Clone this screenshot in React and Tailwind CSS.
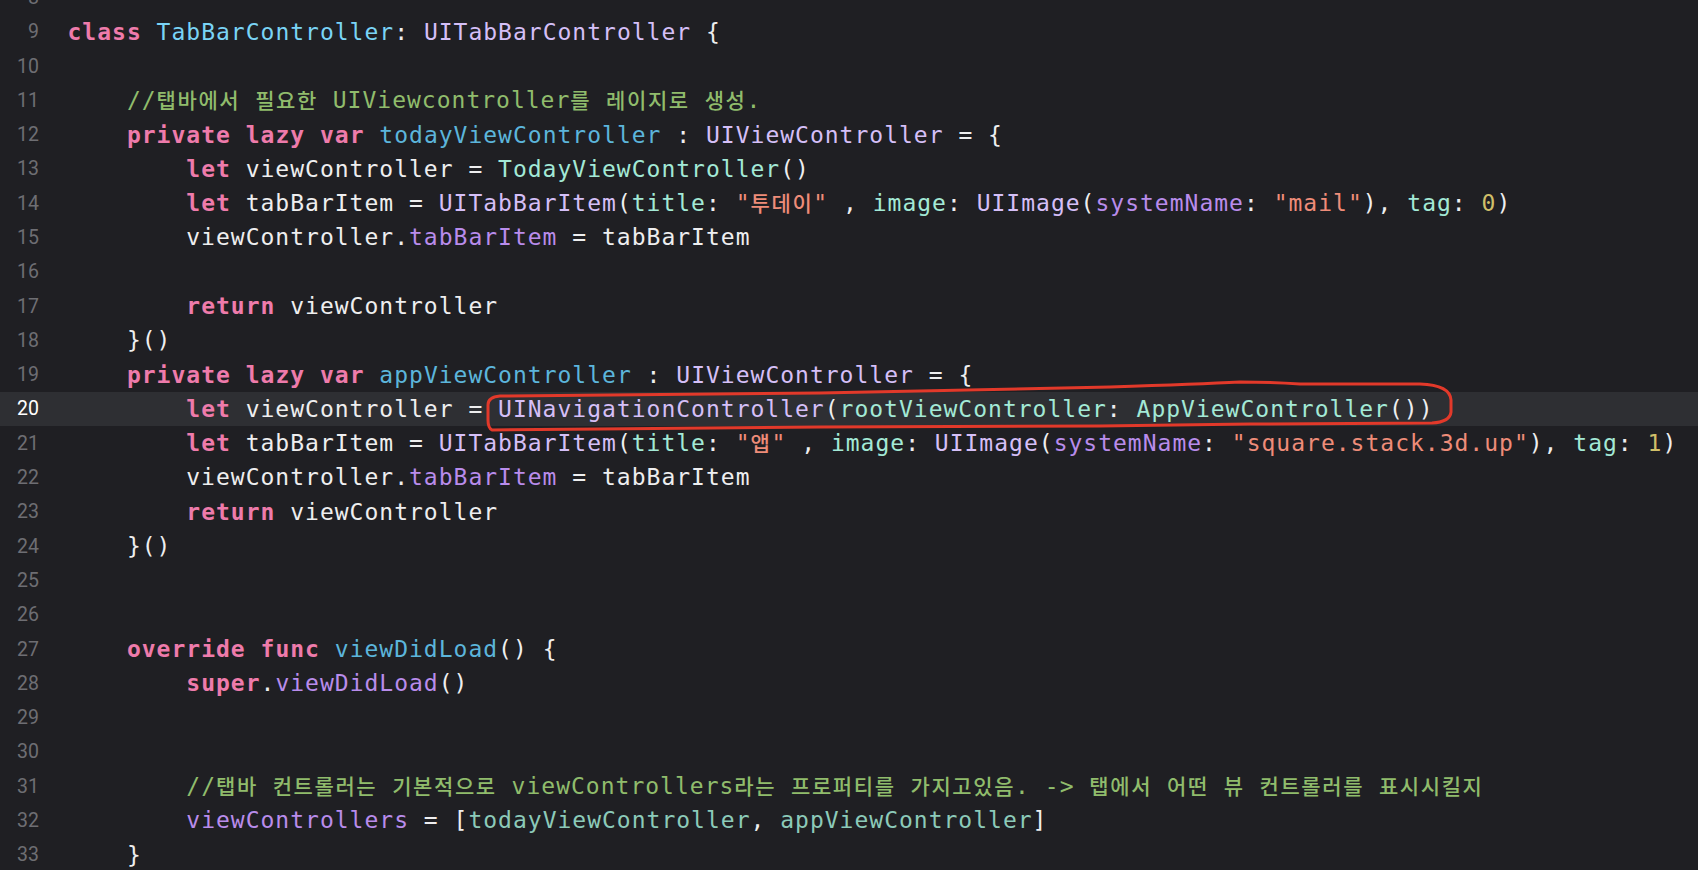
import React from 'react'

// Xcode dark theme token colours
const C = {
  kw: 'text-[#ee7bab] font-bold',
  pl: 'text-[#eeeeef]',
  decl: 'text-[#7ad4f6]',
  odecl: 'text-[#5cb5db]',
  type: 'text-[#d5bff7]',
  proj: 'text-[#a3e9d6]',
  fn: 'text-[#b98ceb]',
  str: 'text-[#ee8c79]',
  num: 'text-[#d0bf69]',
  cm: 'text-[#90bc6c]',
  prop: 'text-[#8ccab9]',
}

const I1 = '    '
const I2 = '        '

const LINES = [
  { n: 8, t: [] },
  { n: 9, t: [['kw', 'class'], ['pl', ' '], ['decl', 'TabBarController'], ['pl', ': '], ['type', 'UITabBarController'], ['pl', ' {']] },
  { n: 10, t: [] },
  { n: 11, t: [['pl', I1], ['cm', '//탭바에서 필요한 UIViewcontroller를 레이지로 생성.']] },
  { n: 12, t: [['pl', I1], ['kw', 'private'], ['pl', ' '], ['kw', 'lazy'], ['pl', ' '], ['kw', 'var'], ['pl', ' '], ['odecl', 'todayViewController'], ['pl', ' : '], ['type', 'UIViewController'], ['pl', ' = {']] },
  { n: 13, t: [['pl', I2], ['kw', 'let'], ['pl', ' viewController = '], ['proj', 'TodayViewController'], ['pl', '()']] },
  { n: 14, t: [['pl', I2], ['kw', 'let'], ['pl', ' tabBarItem = '], ['type', 'UITabBarItem'], ['pl', '('], ['proj', 'title'], ['pl', ': '], ['str', '"투데이"'], ['pl', ' , '], ['proj', 'image'], ['pl', ': '], ['type', 'UIImage'], ['pl', '('], ['fn', 'systemName'], ['pl', ': '], ['str', '"mail"'], ['pl', '), '], ['proj', 'tag'], ['pl', ': '], ['num', '0'], ['pl', ')']] },
  { n: 15, t: [['pl', I2 + 'viewController.'], ['fn', 'tabBarItem'], ['pl', ' = tabBarItem']] },
  { n: 16, t: [] },
  { n: 17, t: [['pl', I2], ['kw', 'return'], ['pl', ' viewController']] },
  { n: 18, t: [['pl', I1 + '}()']] },
  { n: 19, t: [['pl', I1], ['kw', 'private'], ['pl', ' '], ['kw', 'lazy'], ['pl', ' '], ['kw', 'var'], ['pl', ' '], ['odecl', 'appViewController'], ['pl', ' : '], ['type', 'UIViewController'], ['pl', ' = {']] },
  { n: 20, cur: true, t: [['pl', I2], ['kw', 'let'], ['pl', ' viewController = '], ['type', 'UINavigationController'], ['pl', '('], ['proj', 'rootViewController'], ['pl', ': '], ['proj', 'AppViewController'], ['pl', '())']] },
  { n: 21, t: [['pl', I2], ['kw', 'let'], ['pl', ' tabBarItem = '], ['type', 'UITabBarItem'], ['pl', '('], ['proj', 'title'], ['pl', ': '], ['str', '"앱"'], ['pl', ' , '], ['proj', 'image'], ['pl', ': '], ['type', 'UIImage'], ['pl', '('], ['fn', 'systemName'], ['pl', ': '], ['str', '"square.stack.3d.up"'], ['pl', '), '], ['proj', 'tag'], ['pl', ': '], ['num', '1'], ['pl', ')']] },
  { n: 22, t: [['pl', I2 + 'viewController.'], ['fn', 'tabBarItem'], ['pl', ' = tabBarItem']] },
  { n: 23, t: [['pl', I2], ['kw', 'return'], ['pl', ' viewController']] },
  { n: 24, t: [['pl', I1 + '}()']] },
  { n: 25, t: [] },
  { n: 26, t: [] },
  { n: 27, t: [['pl', I1], ['kw', 'override'], ['pl', ' '], ['kw', 'func'], ['pl', ' '], ['odecl', 'viewDidLoad'], ['pl', '() {']] },
  { n: 28, t: [['pl', I2], ['kw', 'super'], ['pl', '.'], ['fn', 'viewDidLoad'], ['pl', '()']] },
  { n: 29, t: [] },
  { n: 30, t: [] },
  { n: 31, t: [['pl', I2], ['cm', '//탭바 컨트롤러는 기본적으로 viewControllers라는 프로퍼티를 가지고있음. -> 탭에서 어떤 뷰 컨트롤러를 표시시킬지']] },
  { n: 32, t: [['pl', I2], ['fn', 'viewControllers'], ['pl', ' = ['], ['prop', 'todayViewController'], ['pl', ', '], ['prop', 'appViewController'], ['pl', ']']] },
  { n: 33, t: [['pl', I1 + '}']] },
]

// Hangul falls back to a narrower glyph in Xcode
function Text({ text }) {
  const parts = text.split(/([\uac00-\ud7a3]+)/)
  return parts.map((p, i) =>
    /[\uac00-\ud7a3]/.test(p) ? (
      <span key={i} className="text-[21px] font-medium tracking-[1.6px]" style={{ fontFamily: '"Noto Sans CJK KR", sans-serif' }}>{p}</span>
    ) : (
      p
    )
  )
}

function Line({ line }) {
  return (
    <div className={`flex h-[34.3px] items-center ${line.cur ? 'bg-[#2e2f33]' : ''}`}>
      <div
        className={`w-[39px] shrink-0 text-right text-[19.5px] ${line.cur ? 'text-white' : 'text-[#6e6e73]'}`}
        style={{ fontFamily: 'Roboto, sans-serif' }}
      >
        {line.n}
      </div>
      <div className="ml-[28.5px] whitespace-pre text-[23px] tracking-[1px]">
        {line.t.map(([k, s], i) => (
          <span key={i} className={C[k]}>
            <Text text={s} />
          </span>
        ))}
      </div>
    </div>
  )
}

export default function App() {
  return (
    <div
      className="relative h-[870px] w-[1698px] overflow-hidden bg-[#1f1f23]"
      style={{ fontFamily: '"DejaVu Sans Mono", "Noto Sans CJK KR", monospace' }}
    >
      <div className="mt-[-19.6px] flex flex-col">
        {LINES.map((l) => (
          <Line key={l.n} line={l} />
        ))}
      </div>

      {/* hand drawn red marker around line 20 */}
      <svg className="pointer-events-none absolute left-0 top-0" width="1698" height="870" viewBox="0 0 1698 870">
        <path
          d="M 492 430 Q 488 428 488 420 L 488 405 Q 488 397 500 396 L 820 393 Q 1000 389 1110 387 Q 1200 384 1240 382 Q 1270 382 1300 384 L 1420 384 Q 1450 385 1451 400 L 1451 412 Q 1450 422 1432 423 L 1250 424 L 1100 426 L 820 427 L 600 429 L 492 430"
          fill="none"
          stroke="#e2392a"
          strokeWidth="3"
          strokeLinecap="round"
          strokeLinejoin="round"
        />
      </svg>
    </div>
  )
}
